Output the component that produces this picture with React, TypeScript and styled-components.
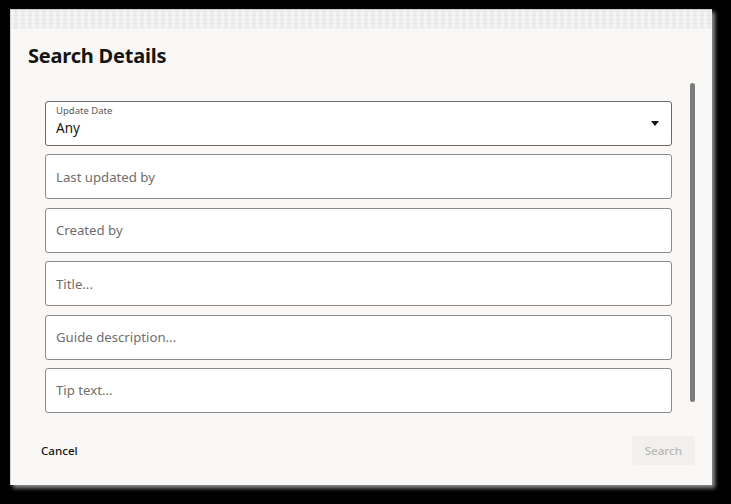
import React from 'react';
import styled, { createGlobalStyle } from 'styled-components';

const GlobalStyle = createGlobalStyle`
  html, body {
    margin: 0;
    padding: 0;
    background: #000;
  }
  body {
    font-family: "Noto Sans", "Open Sans", sans-serif;
  }
`;

const Page = styled.div`
  width: 731px;
  height: 504px;
  padding: 9px 0 0 10px;
  box-sizing: border-box;
`;

const Dialog = styled.div`
  width: 702px;
  height: 476px;
  background: #f9f8f6;
  border-top: 1px solid #c9c9c9;
  border-left: 1px solid #d4d4d4;
  box-shadow: 3px 3px 4px rgba(160, 160, 160, 0.9);
  box-sizing: border-box;
  display: flex;
  flex-direction: column;
`;

const TitleBar = styled.div`
  height: 18px;
  background-color: #ededed;
  background-image:
    repeating-linear-gradient(90deg, rgba(255,255,255,0.45) 0 3px, transparent 3px 7px),
    repeating-linear-gradient(0deg, rgba(220,220,220,0.4) 0 1px, transparent 1px 4px);
  border-bottom: 1px solid #f2f2f2;
`;

const Header = styled.h1`
  margin: 0;
  padding: 14px 0 0 17px;
  font-size: 20px;
  font-weight: 700;
  color: #161513;
  letter-spacing: -0.2px;
  line-height: 26px;
`;

const Body = styled.div`
  display: flex;
  padding: 14px 0 0 34px;
  gap: 18px;
`;

const Fields = styled.div`
  width: 627px;
  display: flex;
  flex-direction: column;
  gap: 8.4px;
  padding-top: 18px;
`;

const Field = styled.div`
  height: 45px;
  box-sizing: border-box;
  background: #fff;
  border: 1px solid #8c8b89;
  border-radius: 3px;
  display: flex;
  align-items: center;
  padding: 0 10px;
  font-size: 13.2px;
  color: #6f6e6c;
`;

const SelectField = styled(Field)`
  border-color: #6b6a68;
  justify-content: space-between;
`;

const SelectText = styled.div`
  display: flex;
  flex-direction: column;
  margin-bottom: 5px;
`;

const FloatLabel = styled.span`
  font-size: 9.5px;
  color: #5b5a58;
  line-height: 12px;
`;

const Value = styled.span`
  font-size: 13.5px;
  color: #161513;
  line-height: 18px;
  margin-top: 2px;
`;

const Caret = styled.span`
  width: 0;
  height: 0;
  border-left: 4.5px solid transparent;
  border-right: 4.5px solid transparent;
  border-top: 5px solid #161513;
  margin-right: 2px;
`;

const ScrollTrack = styled.div`
  width: 5px;
  height: 319px;
  background: #7b7b7b;
  border-radius: 3px;
`;

const Footer = styled.div`
  margin-top: auto;
  display: flex;
  justify-content: space-between;
  align-items: center;
  padding: 0 17px 20px 17px;
`;

const TextButton = styled.button<{ $disabled?: boolean }>`
  font-family: inherit;
  font-size: 11.6px;
  font-weight: 500;
  border: none;
  border-radius: 3px;
  height: 29px;
  padding: 0 13px;
  background: ${(p) => (p.$disabled ? '#f1f0ee' : 'transparent')};
  color: ${(p) => (p.$disabled ? '#b9b8b6' : '#161513')};
  cursor: ${(p) => (p.$disabled ? 'default' : 'pointer')};
`;

const placeholders = ['Last updated by', 'Created by', 'Title...', 'Guide description...', 'Tip text...'];

export default function App() {
  return (
    <Page>
      <GlobalStyle />
      <Dialog>
        <TitleBar />
        <Header>Search Details</Header>
        <Body>
          <Fields>
            <SelectField>
              <SelectText>
                <FloatLabel>Update Date</FloatLabel>
                <Value>Any</Value>
              </SelectText>
              <Caret />
            </SelectField>
            {placeholders.map((p) => (
              <Field key={p}>{p}</Field>
            ))}
          </Fields>
          <ScrollTrack />
        </Body>
        <Footer>
          <TextButton>Cancel</TextButton>
          <TextButton $disabled>Search</TextButton>
        </Footer>
      </Dialog>
    </Page>
  );
}
